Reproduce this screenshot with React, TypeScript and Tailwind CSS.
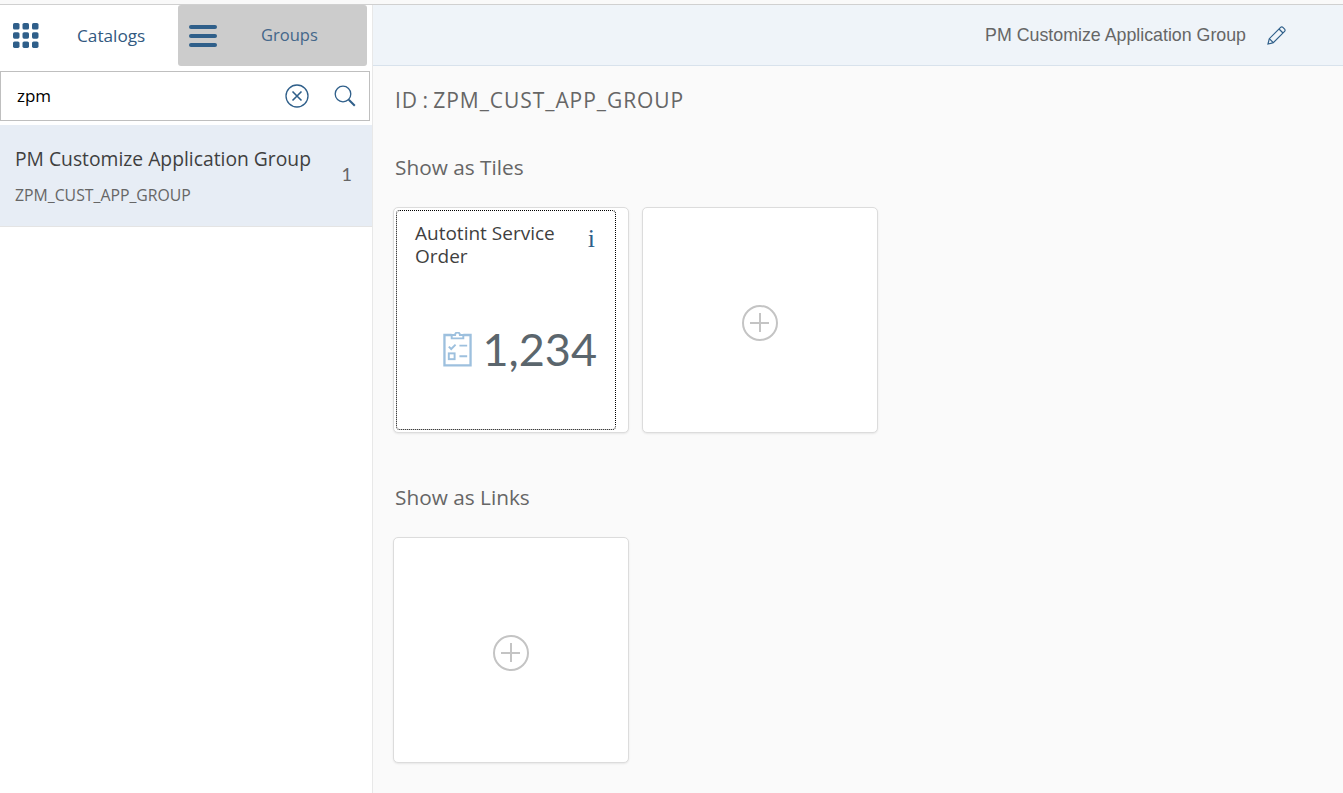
import React from "react";

const font72 = "font-['Open_Sans',sans-serif]";

const AddTile = () => (
  <div className="w-[236px] h-[226px] bg-white rounded-[5px] border border-[#dcdcdc] shadow-[0_1px_2px_rgba(0,0,0,0.08)] flex items-center justify-center pt-[6px]">
    <svg width="38" height="38" viewBox="0 0 38 38" fill="none" stroke="#c4c4c4">
      <circle cx="19" cy="19" r="17" strokeWidth="2" />
      <path d="M19 9v19M9 19h19" strokeWidth="2" />
    </svg>
  </div>
);

const App = () => {
  return (
    <div className={`w-[1343px] h-[793px] overflow-hidden bg-white flex flex-col ${font72}`}>
      <div className="h-[5px] bg-[#f9f9f9] border-b border-[#d0d0d0] shrink-0" />
      <div className="flex flex-1 min-h-0">
        <aside className="w-[373px] shrink-0 border-r border-[#e8e8e8] bg-white flex flex-col">
          <div className="h-[61px] flex">
            <div className="w-[178px] flex items-center">
              <svg className="ml-[13px] shrink-0" width="26" height="25" viewBox="0 0 26 25" fill="#2f5f8a">
                <rect x="0" y="0" width="6.5" height="6.5" rx="1.6" />
                <rect x="9.5" y="0" width="6.5" height="6.5" rx="1.6" />
                <rect x="19" y="0" width="6.5" height="6.5" rx="1.6" />
                <rect x="0" y="9.2" width="6.5" height="6.5" rx="1.6" />
                <rect x="9.5" y="9.2" width="6.5" height="6.5" rx="1.6" />
                <rect x="19" y="9.2" width="6.5" height="6.5" rx="1.6" />
                <rect x="0" y="18.4" width="6.5" height="6.5" rx="1.6" />
                <rect x="9.5" y="18.4" width="6.5" height="6.5" rx="1.6" />
                <rect x="19" y="18.4" width="6.5" height="6.5" rx="1.6" />
              </svg>
              <span className="ml-[38px] text-[17.2px] text-[#32597f]">Catalogs</span>
            </div>
            <div className="w-[189px] bg-[#cccccc] rounded-[3px] flex items-center">
              <svg className="ml-[11px] shrink-0" width="28" height="22" viewBox="0 0 28 22" fill="#2f5f8a">
                <rect x="0" y="0" width="28" height="4" rx="2" />
                <rect x="0" y="9" width="28" height="4" rx="2" />
                <rect x="0" y="18" width="28" height="4" rx="2" />
              </svg>
              <span className="ml-[44px] text-[16.5px] text-[#44678a]">Groups</span>
            </div>
          </div>
          <div className="mt-[5px] w-[370px] h-[50px] border border-[#bfbfbf] flex items-center">
            <span className="ml-[16px] text-[17px] text-black">zpm</span>
            <svg className="ml-auto -mt-[1px]" width="24" height="24" viewBox="0 0 24 24" fill="none" stroke="#2f5f8a" strokeWidth="1.3">
              <circle cx="12" cy="12" r="11" />
              <path d="M7.5 7.5l9 9M16.5 7.5l-9 9" strokeWidth="1.6" />
            </svg>
            <svg className="ml-[25px] mr-[13px] -mt-[1px]" width="22" height="22" viewBox="0 0 22 22" fill="none" stroke="#2f5f8a" strokeWidth="1.3">
              <circle cx="9" cy="9" r="7.8" />
              <path d="M14.8 14.8l6 6" strokeWidth="2" />
            </svg>
          </div>
          <div className="mt-[4px] h-[102px] bg-[#e7edf5] border-b border-[#e4e4e4] flex items-center pl-[15px] pr-[20px]">
            <div className="flex-1 pt-[2px]">
              <div className="text-[19.3px] leading-[26px] text-[#3f3f3f] -mt-[2px]">PM Customize Application Group</div>
              <div className="mt-[13px] text-[15.8px] leading-[20px] text-[#666666]">ZPM_CUST_APP_GROUP</div>
            </div>
            <span className="font-['Lato',sans-serif] text-[18px] text-[#666666] -mt-[3px]">1</span>
          </div>
        </aside>

        <main className="flex-1 bg-[#fafafa] flex flex-col min-w-0">
          <header className="h-[61px] shrink-0 bg-[#eff4f9] border-b border-[#d8e2ec] flex items-center justify-end pr-[57px]">
            <span className="font-['Liberation_Sans',sans-serif] text-[17.8px] text-[#666666]">PM Customize Application Group</span>
            <svg className="ml-[21px]" width="19" height="19" viewBox="0 0 19 19" fill="none" stroke="#2f5f8a" strokeWidth="1.2">
              <path d="M1 18l1.3-5.3L13.6 1.4a1.6 1.6 0 0 1 2.3 0l1.7 1.7a1.6 1.6 0 0 1 0 2.3L6.3 16.7z" />
              <path d="M2.3 12.7l4 4M12 3l4 4" />
            </svg>
          </header>
          <div className="pl-[22px] pt-[20px]">
            <div className="text-[21px] leading-[28px] text-[#666666] tracking-[0.95px] [word-spacing:-2px]">ID : ZPM_CUST_APP_GROUP</div>
            <div className="mt-[39px] text-[20.8px] leading-[28px] text-[#666666]">Show as Tiles</div>
            <div className="mt-[26px] -ml-[2px] flex gap-[13px]">
              <div className="w-[236px] h-[226px] bg-white rounded-[5px] border border-[#dcdcdc] shadow-[0_1px_2px_rgba(0,0,0,0.08)] p-[2px] pr-[12px]">
                <div className="h-full rounded-[4px] border border-dotted border-black pl-[18px] pr-[18px] pt-[11px] flex flex-col">
                  <div className="flex justify-between">
                    <div className="w-[160px] text-[19px] leading-[23px] text-[#3f3f3f]">Autotint Service Order</div>
                    <span className="font-['Liberation_Serif',serif] text-[26px] leading-[34px] text-[#2f5f8a] mr-[2px]">i</span>
                  </div>
                  <div className="mt-[51px] flex items-center justify-end">
                    <svg width="29" height="35" viewBox="0 0 30 36" fill="none" stroke="#9dc0de" strokeWidth="2">
                      <path d="M9 3H1.5v31.5h27V3H21" strokeWidth="2.4" />
                      <path d="M9 6.5V3h3.5a2.5 2.5 0 0 1 5 0H21v3.5z" />
                      <path d="M6 15l2.5 2.5L13 13M17 14h8M17 25h8" />
                      <rect x="6" y="22" width="6" height="6" />
                    </svg>
                    <span className="ml-[10px] font-['Lato',sans-serif] text-[45px] leading-[60px] text-[#5b666d]">1,234</span>
                  </div>
                </div>
              </div>
              <AddTile />
            </div>
            <div className="mt-[50px] text-[20.8px] leading-[28px] text-[#666666]">Show as Links</div>
            <div className="mt-[26px] -ml-[2px]">
              <AddTile />
            </div>
          </div>
        </main>
      </div>
    </div>
  );
};

export default App;
